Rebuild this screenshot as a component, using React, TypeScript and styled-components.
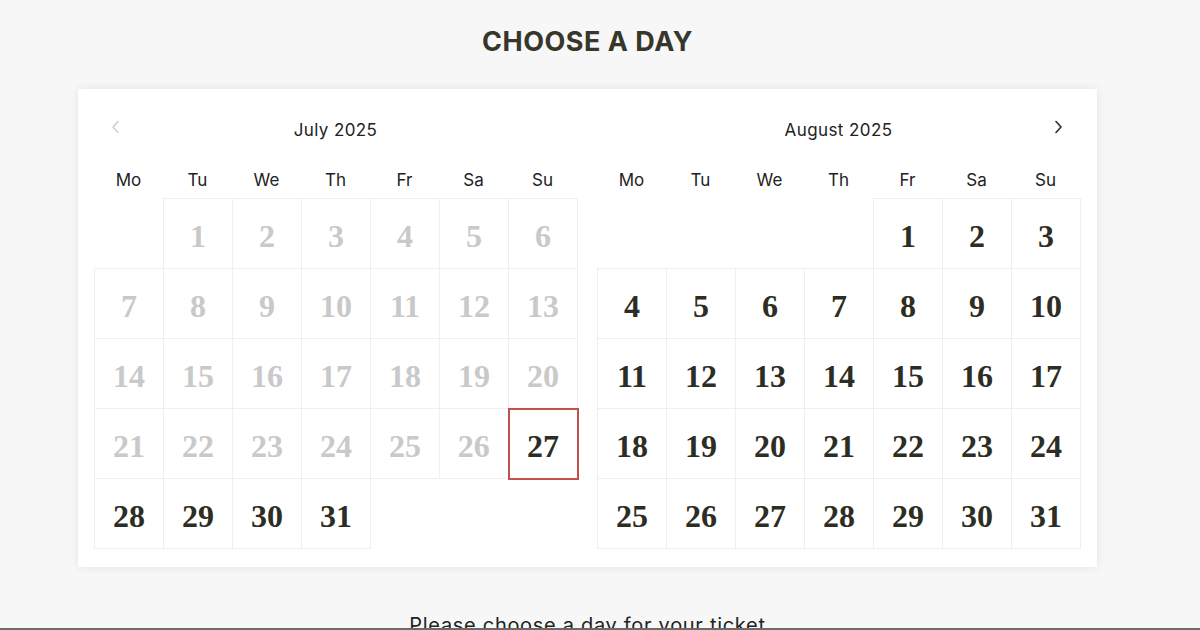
import React from 'react';
import styled, { createGlobalStyle } from 'styled-components';

const GlobalStyle = createGlobalStyle`
  html, body {
    margin: 0;
    padding: 0;
    background: #f7f7f7;
    overflow: hidden;
  }
`;

const Frame = styled.div`
  width: 100%;
  height: 628px;
  overflow: hidden;
  border-bottom: 2px solid #6b6b6b;
`;

const Page = styled.div`
  width: 1175px;
  display: flex;
  flex-direction: column;
  align-items: center;
  padding-top: 25px;
  box-sizing: border-box;
  font-family: Inter, 'Liberation Sans', sans-serif;
`;

const Title = styled.h1`
  margin: 0;
  font-size: 27px;
  line-height: 34px;
  font-weight: 700;
  letter-spacing: 0.5px;
  color: #36362b;
`;

const Card = styled.div`
  margin-top: 30px;
  width: 1019px;
  box-sizing: border-box;
  padding: 0 17px 18px 16px;
  background: #fff;
  box-shadow: 0 0 8px rgba(0, 0, 0, 0.09);
  display: flex;
  justify-content: space-between;
`;

const Month = styled.div`
  width: 483px;
  display: flex;
  flex-direction: column;
`;

const MonthHeader = styled.div`
  height: 80px;
  display: grid;
  grid-template-columns: 44px 1fr 44px;
  align-items: center;
`;

const MonthName = styled.div`
  text-align: center;
  font-size: 17px;
  letter-spacing: 0.4px;
  color: #222;
  padding-top: 2px;
`;

const NavButton = styled.div<{ $disabled?: boolean }>`
  display: flex;
  justify-content: center;
  align-items: center;
  margin-top: -4px;
  color: ${p => (p.$disabled ? '#cfcfcf' : '#2a2a2a')};
`;

const Weekdays = styled.div`
  display: grid;
  grid-template-columns: repeat(7, 69px);
  height: 22px;
  margin-bottom: 7px;
  align-items: center;
`;

const Weekday = styled.div`
  text-align: center;
  font-size: 17px;
  color: #222;
`;

const DayTable = styled.table`
  border-collapse: collapse;
  table-layout: fixed;
  width: 483px;
`;

const DayCell = styled.td<{ $empty?: boolean; $disabled?: boolean; $selected?: boolean }>`
  width: 69px;
  height: 70px;
  padding: 6px 0 0;
  box-sizing: border-box;
  text-align: center;
  vertical-align: middle;
  border: ${p =>
    p.$empty ? 'none' : p.$selected ? '2px solid #c2504b' : '1px solid #efefef'};
  font-family: 'Liberation Serif', 'DejaVu Serif', serif;
  font-weight: 700;
  font-size: 32px;
  color: ${p => (p.$disabled ? '#c9c9c9' : '#2d2d23')};
`;

const Hint = styled.p`
  margin: 46px 0 0;
  font-size: 20px;
  letter-spacing: 0.7px;
  color: #222;
`;

const Chevron: React.FC<{ dir: 'left' | 'right' }> = ({ dir }) => (
  <svg width="10" height="14" viewBox="0 0 10 14" fill="none">
    <polyline
      points={dir === 'left' ? '7,1.5 2,7 7,12.5' : '3,1.5 8,7 3,12.5'}
      stroke="currentColor"
      strokeWidth="1.6"
      strokeLinecap="round"
      strokeLinejoin="round"
    />
  </svg>
);

const WEEKDAYS = ['Mo', 'Tu', 'We', 'Th', 'Fr', 'Sa', 'Su'];

interface MonthProps {
  name: string;
  offset: number;
  days: number;
  disabledUntil?: number;
  selected?: number;
  nav: 'left' | 'right';
}

const MonthView: React.FC<MonthProps> = ({ name, offset, days, disabledUntil = 0, selected, nav }) => {
  const cells: (number | null)[] = [];
  for (let i = 0; i < offset; i++) cells.push(null);
  for (let d = 1; d <= days; d++) cells.push(d);
  while (cells.length % 7) cells.push(null);
  const rows: (number | null)[][] = [];
  for (let i = 0; i < cells.length; i += 7) rows.push(cells.slice(i, i + 7));

  return (
    <Month>
      <MonthHeader>
        <NavButton $disabled>{nav === 'left' && <Chevron dir="left" />}</NavButton>
        <MonthName>{name}</MonthName>
        <NavButton>{nav === 'right' && <Chevron dir="right" />}</NavButton>
      </MonthHeader>
      <Weekdays>
        {WEEKDAYS.map(w => (
          <Weekday key={w}>{w}</Weekday>
        ))}
      </Weekdays>
      <DayTable>
        <tbody>
          {rows.map((row, r) => (
            <tr key={r}>
              {row.map((d, i) => (
                <DayCell
                  key={i}
                  $empty={d === null}
                  $disabled={d !== null && d <= disabledUntil}
                  $selected={d === selected}>
                  {d}
                </DayCell>
              ))}
            </tr>
          ))}
        </tbody>
      </DayTable>
    </Month>
  );
};

const App: React.FC = () => {
  return (
    <>
      <GlobalStyle />
      <Frame>
        <Page>
          <Title>CHOOSE A DAY</Title>
          <Card>
            <MonthView name="July 2025" offset={1} days={31} disabledUntil={26} selected={27} nav="left" />
            <MonthView name="August 2025" offset={4} days={31} nav="right" />
          </Card>
          <Hint>Please choose a day for your ticket</Hint>
        </Page>
      </Frame>
    </>
  );
};

export default App;
